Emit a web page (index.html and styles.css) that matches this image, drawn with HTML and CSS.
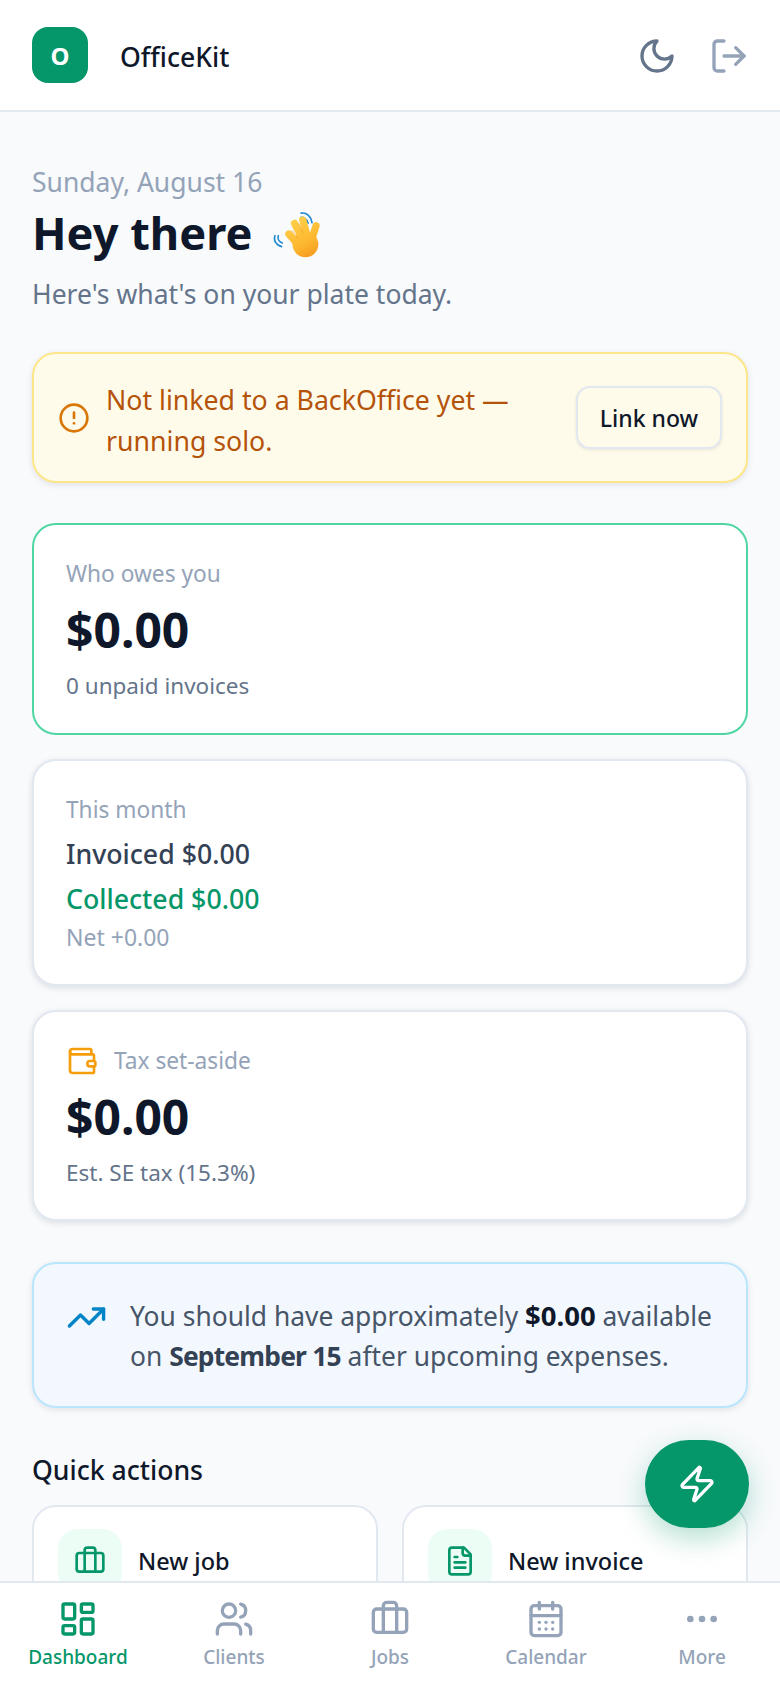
FILE: index.html
```html
<!DOCTYPE html>
<html lang="en">
<head>
    <meta charset="UTF-8">
    <meta name="viewport" content="width=device-width, initial-scale=1.0">
    <title>OfficeKit</title>
    <link rel="stylesheet" href="styles.css">
</head>
<body>
    <div class="app">
        <header class="topbar">
            <div class="logo">O</div>
            <div class="brand">OfficeKit</div>
            <svg class="icon moon" viewBox="0 0 24 24"><path d="M12 3a6 6 0 0 0 9 9 9 9 0 1 1-9-9Z"/></svg>
            <svg class="icon logout" viewBox="0 0 24 24"><path d="M9 21H5a2 2 0 0 1-2-2V5a2 2 0 0 1 2-2h4"/><path d="M16 17l5-5-5-5"/><path d="M21 12H9"/></svg>
        </header>

        <main class="content">
            <section class="hello">
                <div class="date">Sunday, August 16</div>
                <h1>Hey there
                    <svg class="wave" viewBox="40 60 142 150">
                        <defs>
                            <linearGradient id="handFill" gradientUnits="userSpaceOnUse" x1="90" y1="90" x2="150" y2="205">
                                <stop offset="0" stop-color="#ffd149"/>
                                <stop offset="0.65" stop-color="#fdb62f"/>
                                <stop offset="1" stop-color="#f59a1f"/>
                            </linearGradient>
                        </defs>
                        <g class="wave-blue">
                            <path d="M125 69c16-3 30 10 33 29"/>
                            <path d="M124 82c10-2 19 5 22 17"/>
                            <path d="M46 137c-5 14 3 29 20 33"/>
                            <path d="M56 137c-3 9 2 18 12 22"/>
                        </g>
                        <g class="wave-fingers">
                            <path d="M88 132l28 32"/>
                            <path d="M105 100l26 50"/>
                            <path d="M130 90l14 50"/>
                            <path d="M170 107l-14 44"/>
                        </g>
                        <circle class="wave-palm" cx="138" cy="163" r="39"/>
                        <g class="wave-creases">
                            <path d="M98 122l18 24"/>
                            <path d="M118 100l13 30"/>
                        </g>
                    </svg>
                </h1>
                <p class="lead">Here's what's on your plate today.</p>
            </section>

            <section class="alert">
                <svg class="icon alert-icon" viewBox="0 0 24 24"><circle cx="12" cy="12" r="10"/><path d="M12 8v4"/><path d="M12 16h.01"/></svg>
                <div class="alert-text">Not linked to a BackOffice yet — running solo.</div>
                <button class="link-btn">Link now</button>
            </section>

            <section class="card card-owes">
                <div class="label">Who owes you</div>
                <div class="amount">$0.00</div>
                <div class="sub">0 unpaid invoices</div>
            </section>

            <section class="card card-month">
                <div class="label">This month</div>
                <div class="line">Invoiced $0.00</div>
                <div class="line green">Collected $0.00</div>
                <div class="net">Net +0.00</div>
            </section>

            <section class="card card-tax">
                <div class="label-row">
                    <svg class="icon wallet" viewBox="0 0 24 24"><path d="M19 7V4a1 1 0 0 0-1-1H5a2 2 0 0 0 0 4h15a1 1 0 0 1 1 1v4h-3a2 2 0 0 0 0 4h3a1 1 0 0 0 1-1v-2a1 1 0 0 0-1-1"/><path d="M3 5v14a2 2 0 0 0 2 2h15a1 1 0 0 0 1-1v-4"/></svg>
                    <span class="label">Tax set-aside</span>
                </div>
                <div class="amount">$0.00</div>
                <div class="sub">Est. SE tax (15.3%)</div>
            </section>

            <section class="forecast">
                <svg class="icon trend" viewBox="0 0 24 24"><path d="M22 7l-8.5 8.5-5-5L2 17"/><path d="M16 7h6v6"/></svg>
                <p>You should have approximately <b class="dark">$0.00</b> available<br>on <b>September 15</b> after upcoming expenses.</p>
            </section>

            <h2>Quick actions</h2>
            <section class="actions">
                <div class="action">
                    <div class="action-icon">
                        <svg class="icon" viewBox="0 0 24 24"><path d="M16 20V4a2 2 0 0 0-2-2h-4a2 2 0 0 0-2 2v16"/><rect width="20" height="14" x="2" y="6" rx="2"/></svg>
                    </div>
                    <span>New job</span>
                </div>
                <div class="action">
                    <div class="action-icon">
                        <svg class="icon" viewBox="0 0 24 24"><path d="M15 2H6a2 2 0 0 0-2 2v16a2 2 0 0 0 2 2h12a2 2 0 0 0 2-2V7Z"/><path d="M14 2v4a2 2 0 0 0 2 2h4"/><path d="M10 9H8"/><path d="M16 13H8"/><path d="M16 17H8"/></svg>
                    </div>
                    <span>New invoice</span>
                </div>
            </section>
        </main>

        <button class="fab">
            <svg class="icon" viewBox="0 0 24 24"><path d="M4 14a1 1 0 0 1-.78-1.63l9.9-10.2a.5.5 0 0 1 .86.46l-1.92 6.02A1 1 0 0 0 13 10h7a1 1 0 0 1 .78 1.63l-9.9 10.2a.5.5 0 0 1-.86-.46l1.92-6.02A1 1 0 0 0 11 14z"/></svg>
        </button>

        <nav class="tabbar">
            <div class="tab active">
                <svg class="icon" viewBox="0 0 24 24"><rect width="7" height="9" x="3" y="3" rx="1"/><rect width="7" height="5" x="14" y="3" rx="1"/><rect width="7" height="9" x="14" y="12" rx="1"/><rect width="7" height="5" x="3" y="16" rx="1"/></svg>
                <span>Dashboard</span>
            </div>
            <div class="tab">
                <svg class="icon" viewBox="0 0 24 24"><path d="M16 21v-2a4 4 0 0 0-4-4H6a4 4 0 0 0-4 4v2"/><circle cx="9" cy="7" r="4"/><path d="M22 21v-2a4 4 0 0 0-3-3.87"/><path d="M16 3.13a4 4 0 0 1 0 7.75"/></svg>
                <span>Clients</span>
            </div>
            <div class="tab">
                <svg class="icon" viewBox="0 0 24 24"><path d="M16 20V4a2 2 0 0 0-2-2h-4a2 2 0 0 0-2 2v16"/><rect width="20" height="14" x="2" y="6" rx="2"/></svg>
                <span>Jobs</span>
            </div>
            <div class="tab">
                <svg class="icon" viewBox="0 0 24 24"><path d="M8 2v4"/><path d="M16 2v4"/><rect width="18" height="18" x="3" y="4" rx="2"/><path d="M3 10h18"/><path d="M8 14h.01"/><path d="M12 14h.01"/><path d="M16 14h.01"/><path d="M8 18h.01"/><path d="M12 18h.01"/><path d="M16 18h.01"/></svg>
                <span>Calendar</span>
            </div>
            <div class="tab">
                <svg class="icon" viewBox="0 0 24 24"><circle cx="12" cy="12" r="1"/><circle cx="19" cy="12" r="1"/><circle cx="5" cy="12" r="1"/></svg>
                <span>More</span>
            </div>
        </nav>
    </div>
</body>
</html>
```

FILE: styles.css
```css
* {
    box-sizing: border-box;
}

html, body {
    margin: 0;
    padding: 0;
    height: 100%;
}

body {
    font-family: "Noto Sans", "Open Sans", sans-serif;
    background-color: #f8fafc;
    color: #0f172a;
    overflow: hidden;
}

.app {
    position: relative;
    height: 1688px;
    overflow: hidden;
}

.icon {
    fill: none;
    stroke: currentColor;
    stroke-width: 2;
    stroke-linecap: round;
    stroke-linejoin: round;
    flex-shrink: 0;
}

/* header */
.topbar {
    display: flex;
    align-items: center;
    height: 112px;
    padding: 0 31px 0 32px;
    background-color: #fff;
    border-bottom: 2px solid #e2e8f0;
}

.logo {
    width: 56px;
    height: 56px;
    border-radius: 16px;
    background-color: #059669;
    color: #fff;
    font-size: 24px;
    font-weight: 700;
    display: flex;
    align-items: center;
    justify-content: center;
}

.brand {
    margin-left: 32px;
    padding-top: 3px;
    font-size: 26.6px;
    font-weight: 550;
    flex: 1;
}

.moon {
    width: 40px;
    height: 40px;
    margin-top: 2px;
    color: #64748b;
}

.logout {
    width: 40px;
    height: 40px;
    margin-top: 2px;
    margin-left: 32px;
    color: #94a3b8;
}

/* page content */
.content {
    padding: 51px 32px 0;
}

.date {
    font-size: 26.5px;
    line-height: 38px;
    color: #94a3b8;
}

h1 {
    margin: 2px 0 0;
    font-size: 45.2px;
    line-height: 60px;
    font-weight: 700;
    display: flex;
    align-items: center;
    gap: 21px;
}

.wave {
    width: 47px;
    height: 50px;
    margin-top: 4px;
}

.wave-blue {
    fill: none;
    stroke: #1e88d2;
    stroke-width: 5;
    stroke-linecap: round;
}

.wave-fingers {
    fill: none;
    stroke: url(#handFill);
    stroke-width: 22;
    stroke-linecap: round;
}

.wave-palm {
    fill: url(#handFill);
}

.wave-creases {
    fill: none;
    stroke: #f0a128;
    stroke-width: 2;
    stroke-linecap: round;
}

.lead {
    margin: 12px 0 0;
    font-size: 26.5px;
    line-height: 38px;
    color: #64748b;
}

/* link banner */
.alert {
    display: flex;
    align-items: center;
    margin-top: 39px;
    padding: 0 24px;
    height: 131px;
    background-color: #fffbeb;
    border: 2px solid #fde68a;
    border-radius: 24px;
    box-shadow: 0 2px 6px rgba(15, 23, 42, 0.1);
}

.alert-icon {
    width: 32px;
    height: 32px;
    color: #d97706;
}

.alert-text {
    flex: 1;
    margin-top: 4px;
    margin-left: 16px;
    padding-right: 40px;
    font-size: 26.7px;
    line-height: 41px;
    color: #b45309;
}

.link-btn {
    width: 146px;
    height: 63px;
    padding: 0;
    font-family: inherit;
    font-size: 23px;
    font-weight: 550;
    color: #0f172a;
    background-color: #fffbeb;
    border: 2px solid #e2e8f0;
    border-radius: 14px;
    box-shadow: 0 1px 3px rgba(15, 23, 42, 0.1);
}

/* stat cards */
.card {
    margin-top: 24px;
    padding: 33px 32px 0;
    background-color: #fff;
    border: 2px solid #e2e8f0;
    border-radius: 24px;
    box-shadow: 0 2px 6px rgba(15, 23, 42, 0.12);
}

.card-owes {
    margin-top: 40px;
    height: 212px;
    border-color: #4fd6a3;
    box-shadow: none;
}

.card-month {
    height: 227px;
}

.card-tax {
    height: 211px;
}

.label {
    display: block;
    font-size: 22.7px;
    line-height: 32px;
    color: #94a3b8;
}

.label-row {
    display: flex;
    align-items: center;
    gap: 16px;
}

.wallet {
    width: 32px;
    height: 32px;
    color: #f59e0b;
}

.amount {
    margin-top: 8px;
    font-size: 48px;
    line-height: 64px;
    font-weight: 700;
}

.sub {
    margin-top: 8px;
    font-size: 22.5px;
    line-height: 32px;
    color: #64748b;
}

.line {
    margin-top: 10px;
    font-size: 26.7px;
    line-height: 36px;
    font-weight: 550;
    color: #334155;
}

.line.green {
    margin-top: 9px;
    color: #059669;
}

.net {
    margin-top: 4px;
    font-size: 23px;
    line-height: 32px;
    color: #94a3b8;
}

/* forecast */
.forecast {
    display: flex;
    align-items: flex-start;
    gap: 23px;
    margin-top: 41px;
    height: 146px;
    padding: 32px 32px 0;
    background-color: #f3f8fe;
    border: 2px solid #bae6fd;
    border-radius: 24px;
    box-shadow: 0 2px 6px rgba(15, 23, 42, 0.1);
}

.trend {
    width: 41px;
    height: 41px;
    margin-top: 1px;
    color: #0284c7;
}

.forecast p {
    margin: 0;
    font-size: 26.4px;
    line-height: 40px;
    color: #475569;
    white-space: nowrap;
}

.forecast b {
    font-weight: 700;
    letter-spacing: -0.8px;
    color: #334155;
}

.forecast b.dark {
    font-size: 27.5px;
    letter-spacing: 0;
    color: #0f172a;
}

h2 {
    margin: 44px 0 0;
    font-size: 26.6px;
    line-height: 36px;
    font-weight: 550;
}

/* quick actions */
.actions {
    display: grid;
    grid-template-columns: 1fr 1fr;
    gap: 24px;
    margin-top: 17px;
}

.action {
    display: flex;
    align-items: center;
    gap: 16px;
    padding: 22px 24px;
    background-color: #fff;
    border: 2px solid #e2e8f0;
    border-radius: 24px;
    font-size: 23.5px;
    font-weight: 550;
}

.action-icon {
    width: 64px;
    height: 64px;
    border-radius: 20px;
    background-color: #ecfdf5;
    color: #059669;
    display: flex;
    align-items: center;
    justify-content: center;
}

.action-icon .icon {
    width: 32px;
    height: 32px;
}

/* floating button sits over the page */
.fab {
    position: absolute;
    left: 645px;
    top: 1440px;
    width: 104px;
    height: 88px;
    border: none;
    border-radius: 44px;
    background-color: #059669;
    color: #fff;
    display: flex;
    align-items: center;
    justify-content: center;
    box-shadow: 0 10px 28px rgba(5, 150, 105, 0.3);
}

.fab .icon {
    width: 40px;
    height: 40px;
}

.tabbar {
    position: absolute;
    left: 0;
    right: 0;
    bottom: 0;
    height: 107px;
    display: grid;
    grid-template-columns: repeat(5, 1fr);
    background-color: #fff;
    border-top: 2px solid #e2e8f0;
}

.tab {
    display: flex;
    flex-direction: column;
    align-items: center;
    padding-top: 16px;
    color: #94a3b8;
    font-size: 19px;
    line-height: 28px;
    font-weight: 500;
}

.tab .icon {
    width: 40px;
    height: 40px;
    margin-bottom: 4px;
}

.tab.active {
    color: #059669;
}
```
